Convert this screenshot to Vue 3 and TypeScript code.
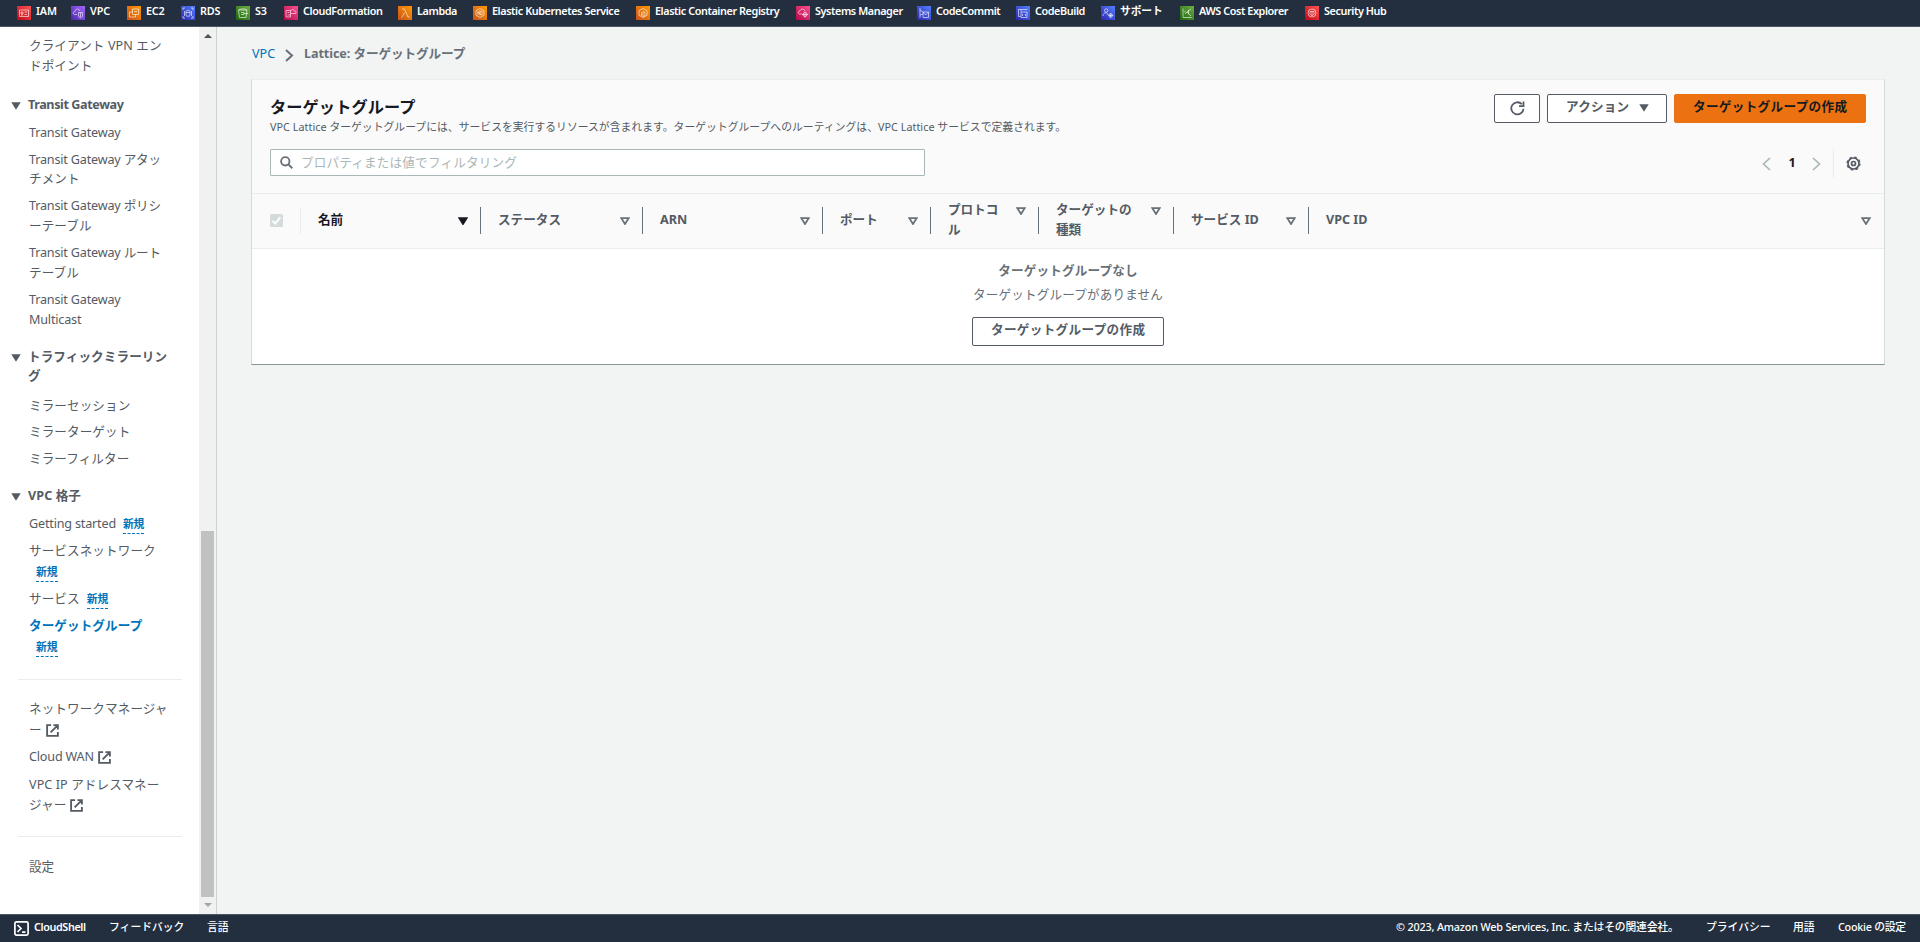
<script setup lang="ts">
interface Service { name: string; tone: string; icon: string }
interface NavItem { lines: string[]; badge?: 'inline' | 'below'; active?: boolean; external?: boolean }
interface NavSection { title?: string[]; items: NavItem[] }
interface Column { label: string[]; active?: boolean }

const services: Service[] = [
  { name: 'IAM', tone: 'red', icon: 'M2.5 4h9v6.500h-9zM4 6h2v2H4zM7.500 6h2.500M7.500 8.500h2.500M4 9h2' },
  { name: 'VPC', tone: 'purple', icon: 'M6 8.500H4C1.500 8.500 2 5.500 4 5.500C4 2.500 8.500 2.500 9 5M7.500 6.500h4v4l-2 1.500l-2-1.500zM9.500 7v4' },
  { name: 'EC2', tone: 'orange', icon: 'M5.500 3h6v5.500h-6zM8.500 8.500v2.500h-6v-5h3M7 5.500h3' },
  { name: 'RDS', tone: 'blue', icon: 'M2 4V2h2M10 2h2v2M2 10v2h2M10 12h2v-2M5 5.500c0-1.500 4-1.500 4 0v4c0 1-4 1-4 0zM5 6.500h4M3.500 5v5M10.500 5v5' },
  { name: 'S3', tone: 'green', icon: 'M2.500 4h8.500l-1 7.500h-6.500zM2.500 4c1-1.500 8-1.500 8.500 0M5 6.500h3v2H5M8 7.500h4' },
  { name: 'CloudFormation', tone: 'pink', icon: 'M2 4.500h4.500v6.500H2zM3.500 6.500h2M3.500 9h3M7 7.500h4C13 7 12 5 10.500 5C9.500 2.500 7 3.500 7 5' },
  { name: 'Lambda', tone: 'orange', icon: 'M4 3h2.500l3.500 8h1.500M6.800 6.500l-3.300 5' },
  { name: 'Elastic Kubernetes Service', tone: 'orange', icon: 'M7 2.500l4 2.200v4.600l-4 2.200l-4-2.200v-4.600zM7 4.500v5M5 5v4M5 7l3.500-2M5.500 7l3.500 2M9 5v4' },
  { name: 'Elastic Container Registry', tone: 'orange', icon: 'M7 2.500l4 2.200v4.600l-4 2.200l-4-2.200v-4.600zM5.500 6v4M7 5.500l2 1v3l-2 1z' },
  { name: 'Systems Manager', tone: 'pink', icon: 'M6 8H4C1.500 8 2 5 4 5C4.500 2 8.500 3 9 5M7 8.500a2 2 0 1 0 4 0a2 2 0 1 0-4 0M9 5.500v6M6 8.500h6' },
  { name: 'CodeCommit', tone: 'blue', icon: 'M3 2v10M3 4l3 2M6 6h5.500v5.500H6zM6 6l2.500 3l3-3M3 9l3-1' },
  { name: 'CodeBuild', tone: 'blue', icon: 'M2.500 3.500h9M2.500 3.500v7h2M5 6h6v5.500H5zM5 3.500v2M7 8l-1 1l1 1M9 8l1 1l-1 1' },
  { name: 'サポート', tone: 'blue', icon: 'M3.500 4.500a1.700 1.700 0 1 0 3.400 0a1.700 1.700 0 1 0-3.400 0M2 10c0-4 5-4 5-1M8 9.500a1.700 1.700 0 1 0 3.400 0a1.700 1.700 0 1 0-3.400 0M9.700 7v5M7.200 9.500h5' },
  { name: 'AWS Cost Explorer', tone: 'green', icon: 'M3 2.500v9h8.500M5 8l2-2l4-3M7 6l4 4M8.500 4v4M5 4.500v2' },
  { name: 'Security Hub', tone: 'red', icon: 'M3 7a4 4 0 1 0 8 0a4 4 0 1 0-8 0M5 5.500h4v2c0 1-1 2-2 2s-2-1-2-2zM7 5.500v4' },
]

const sections: NavSection[] = [
  { items: [{ lines: ['クライアント VPN エン', 'ドポイント'] }] },
  {
    title: ['Transit Gateway'],
    items: [
      { lines: ['Transit Gateway'] },
      { lines: ['Transit Gateway アタッ', 'チメント'] },
      { lines: ['Transit Gateway ポリシ', 'ーテーブル'] },
      { lines: ['Transit Gateway ルート', 'テーブル'] },
      { lines: ['Transit Gateway', 'Multicast'] },
    ],
  },
  {
    title: ['トラフィックミラーリン', 'グ'],
    items: [{ lines: ['ミラーセッション'] }, { lines: ['ミラーターゲット'] }, { lines: ['ミラーフィルター'] }],
  },
  {
    title: ['VPC 格子'],
    items: [
      { lines: ['Getting started'], badge: 'inline' },
      { lines: ['サービスネットワーク'], badge: 'below' },
      { lines: ['サービス'], badge: 'inline' },
      { lines: ['ターゲットグループ'], badge: 'below', active: true },
    ],
  },
]

const tools: NavItem[] = [
  { lines: ['ネットワークマネージャ', 'ー'], external: true },
  { lines: ['Cloud WAN'], external: true },
  { lines: ['VPC IP アドレスマネー', 'ジャー'], external: true },
]

const columns: Column[] = [
  { label: ['名前'], active: true },
  { label: ['ステータス'] },
  { label: ['ARN'] },
  { label: ['ポート'] },
  { label: ['プロトコ', 'ル'] },
  { label: ['ターゲットの', '種類'] },
  { label: ['サービス ID'] },
  { label: ['VPC ID'] },
]

// Latin runs are tracked slightly tighter than kana.
const tracking = (text: string): string => (/[A-Za-z]{4}/.test(text) ? 'latin' : 'kana')
</script>

<template>
  <div class="console">
    <header class="topbar">
      <a v-for="s in services" :key="s.name" class="service">
        <svg class="service-icon" :class="s.tone" viewBox="0 0 14 14"><path :d="s.icon" /></svg>
        <span :class="tracking(s.name)">{{ s.name }}</span>
      </a>
    </header>

    <div class="body">
      <aside class="sidebar">
        <nav class="nav">
          <section v-for="(sec, i) in sections" :key="i" class="section">
            <h3 v-if="sec.title" class="section-title" :class="{ tall: sec.title.length > 1 }">
              <svg class="caret" viewBox="0 0 10 8"><path d="M.3.300h9.400L5 7.700z" /></svg>
              <span v-for="l in sec.title" :key="l" class="line" :class="tracking(l)">{{ l }}</span>
            </h3>
            <a v-for="(item, j) in sec.items" :key="j" class="item" :class="{ active: item.active }">
              <span v-for="(l, k) in item.lines" :key="k" class="line" :class="tracking(l)">{{ l }}<em v-if="item.badge === 'inline'" class="badge">新規</em></span>
              <span v-if="item.badge === 'below'" class="line below"><em class="badge">新規</em></span>
            </a>
          </section>
          <hr class="rule" />
          <section class="section">
            <a v-for="(item, j) in tools" :key="j" class="item">
              <span v-for="(l, k) in item.lines" :key="k" class="line" :class="[tracking(l), { linked: k === item.lines.length - 1 }]">{{ l }}<svg
                v-if="k === item.lines.length - 1" class="external" viewBox="0 0 14 14"><path d="M5.500 1.200H1.200v11.600h11.600V8.500M8 1.200h4.800V6M12.800 1.200L5 9" /></svg></span>
            </a>
          </section>
          <hr class="rule second" />
          <a class="item"><span class="line">設定</span></a>
        </nav>
        <div class="scrollbar">
          <svg class="arrow" viewBox="0 0 8 4"><path d="M0 4L4 0L8 4z" /></svg>
          <div class="thumb"></div>
          <svg class="arrow down" viewBox="0 0 8 4"><path d="M0 0L4 4L8 0z" /></svg>
        </div>
      </aside>

      <main class="main">
        <div class="breadcrumb">
          <a class="crumb-link">VPC</a>
          <svg class="crumb-sep" viewBox="0 0 9 13"><path d="M1 1l6 5.500L1 12" /></svg>
          <strong>Lattice: ターゲットグループ</strong>
        </div>

        <section class="card">
          <div class="card-head">
            <div class="heading">
              <div>
                <h1>ターゲットグループ</h1>
                <p class="description">VPC Lattice ターゲットグループには、サービスを実行するリソースが含まれます。ターゲットグループへのルーティングは、VPC Lattice サービスで定義されます。</p>
              </div>
              <div class="actions">
                <button class="btn refresh">
                  <svg viewBox="0 0 15 15"><path d="M13.500 7.700a6.100 6.100 0 1 1-1.700-4.600M13.500.6v4.600H9" /></svg>
                </button>
                <button class="btn menu">アクション<svg class="caret" viewBox="0 0 10 8"><path d="M.3.300h9.400L5 7.700z" /></svg></button>
                <button class="btn create primary">ターゲットグループの作成</button>
              </div>
            </div>
            <div class="filters">
              <div class="search">
                <svg viewBox="0 0 14 14"><circle cx="5.700" cy="5.700" r="4.500" /><path d="M9 9l4.200 4.200" /></svg>
                <span>プロパティまたは値でフィルタリング</span>
              </div>
              <div class="pager">
                <svg class="chev" viewBox="0 0 9 14"><path d="M8 1L1.500 7L8 13" /></svg>
                <b>1</b>
                <svg class="chev" viewBox="0 0 9 14"><path d="M1 1l6.500 6L1 13" /></svg>
                <i class="pager-rule"></i>
                <svg class="gear" viewBox="0 0 15 15">
                  <circle cx="7.500" cy="7.500" r="5.500" />
                  <circle class="teeth" cx="7.500" cy="7.500" r="6.500" />
                  <circle cx="7.500" cy="7.500" r="2" />
                </svg>
              </div>
            </div>
          </div>

          <div class="table-head">
            <div class="select">
              <svg viewBox="0 0 13 13"><rect width="13" height="13" rx="1.500" /><path d="M2.500 6.800l2.800 2.800l5-6.500" /></svg>
            </div>
            <div v-for="(c, i) in columns" :key="i" class="col" :class="{ sorted: c.active }">
              <div class="col-label"><span v-for="l in c.label" :key="l">{{ l }}</span></div>
              <svg class="sort" :class="{ raised: c.label.length > 1 }" viewBox="0 0 10 8"><path d="M1.300 1.200h7.400L5 7z" /></svg>
            </div>
          </div>

          <div class="empty">
            <strong>ターゲットグループなし</strong>
            <p>ターゲットグループがありません</p>
            <button class="btn create">ターゲットグループの作成</button>
          </div>
        </section>
      </main>
    </div>

    <footer class="footer">
      <svg class="shell" viewBox="0 0 15 15"><rect x=".9" y=".9" width="13.200" height="13.200" rx="1.500" /><path d="M3.500 4l3.500 3.500L3.500 11M8 11.200h3.500" /></svg>
      <span class="shell-label">CloudShell</span>
      <span class="feedback">フィードバック</span>
      <span>言語</span>
      <span class="copyright">© 2023, Amazon Web Services, Inc. またはその関連会社。</span>
      <span class="privacy">プライバシー</span>
      <span class="terms">用語</span>
      <span class="cookie">Cookie の設定</span>
    </footer>
  </div>
</template>

<style>
body { margin: 0; overflow: hidden; }
</style>

<style scoped>
* { box-sizing: border-box; }
.console {
  width: 1920px;
  height: 942px;
  display: flex;
  flex-direction: column;
  background: #f2f3f3;
  color: #545b64;
  font: 12.6px/19.8px "Noto Sans", "Noto Sans CJK JP", sans-serif;
  white-space: nowrap;
}
svg { display: block; flex: none; fill: none; stroke: currentColor; }

.topbar {
  height: 27px;
  flex: none;
  display: grid;
  grid-template-columns: 54px 56px 54px 55px 48px 114px 75px 163px 160px 121px 99px 85px 79px 125px 90px;
  padding-left: 17px;
  background: #232f3e;
  border-bottom: 1px solid #4b5563;
  color: #fff;
  font-size: 10.8px;
  font-weight: 600;
  line-height: 22px;
}
.service { display: flex; align-items: flex-start; gap: 5px; }
.service .latin { letter-spacing: -.4px; }
.service .kana { letter-spacing: -.15px; }
.service-icon { width: 14px; height: 14px; margin-top: 6px; stroke: rgba(255, 255, 255, .75); stroke-width: .8; }
.red { background: linear-gradient(45deg, #bd0816, #ff5252); }
.purple { background: linear-gradient(45deg, #4d27a8, #a166ff); }
.orange { background: linear-gradient(45deg, #c8511b, #f90); }
.blue { background: linear-gradient(45deg, #2e27ad, #527fff); }
.green { background: linear-gradient(45deg, #1b660f, #6cae3e); }
.pink { background: linear-gradient(45deg, #b0084d, #ff4f8b); }

.body { flex: 1; display: flex; min-height: 0; }
.sidebar { width: 217px; display: flex; background: #fff; border-right: 1px solid #ccd1d1; overflow: hidden; }
.nav { width: 199px; padding: 9px 18px 0 29px; }
.nav .latin { letter-spacing: -.18px; }
.nav .kana { letter-spacing: .08px; }
.section { margin-bottom: 17.3px; }
.section:first-child { margin-bottom: 19.2px; }
.section-title { margin: 0 0 8.200px; font-size: 12.6px; font-weight: 700; position: relative; }
.section-title.tall { margin-bottom: 9.4px; }
.section-title .line { margin-left: -1px; }
.section-title .latin { letter-spacing: -.4px; }
.section-title .caret { position: absolute; left: -18px; top: 7px; }
.caret { width: 10px; height: 8px; fill: currentColor; stroke: none; }
.line { display: flex; align-items: center; height: 19.8px; white-space: pre; }
.line.below { height: 21px; padding-top: 1px; }
.line.linked { height: 20.6px; }
.item { display: block; margin-bottom: 7.1px; }
.item.active { color: #0073bb; font-weight: 700; }
.badge {
  height: 20px;
  margin-left: 7px;
  border-bottom: 1px dashed #0073bb;
  color: #0073bb;
  font-size: 10.8px;
  font-style: normal;
  font-weight: 700;
  line-height: 19px;
}
.external { width: 13px; height: 13px; margin: 1px 0 0 4px; stroke-width: 2; }
.rule { height: 1px; margin: 22px -1px 19.5px -11px; border: 0; background: #eaeded; }
.rule.second { margin-top: 21.5px; }
.scrollbar { width: 17px; display: flex; flex-direction: column; align-items: center; background: #f1f1f1; padding: 7px 0 7px; }
.arrow { width: 8px; height: 4px; fill: #505050; stroke: none; }
.arrow.down { fill: #a3a3a3; margin-top: 6px; }
.thumb { width: 13px; height: 366px; margin-top: auto; background: #c1c1c1; }

.main { flex: 1; padding: 17px 35px 0 35px; }
.breadcrumb { display: flex; align-items: center; height: 20px; color: #687078; }
.breadcrumb strong { letter-spacing: -.08px; }
.crumb-link { width: 33px; color: #0073bb; }
.crumb-sep { width: 9px; height: 13px; margin: 2px 10px 0 0; stroke-width: 2; }

.card {
  margin-top: 15px;
  width: 1634px;
  height: 286px;
  background: #fff;
  border: 1px solid #d5dbdb;
  border-top-color: #eaeded;
  border-bottom-color: #879596;
  display: flex;
  flex-direction: column;
  margin-left: -1px;
}
.card-head { height: 114px; padding: 14px 18px 0 18px; background: #fafafa; border-bottom: 1px solid #eaeded; }
.heading { display: flex; justify-content: space-between; height: 55px; }
h1 { margin: 2px 0 0; color: #16191f; font-size: 16.2px; line-height: 22px; font-weight: 700; letter-spacing: .1px; }
.description { margin: 0; font-size: 10.8px; line-height: 18px; letter-spacing: .03px; }
.actions { display: flex; gap: 7px; height: 29px; }
.btn {
  height: 29px;
  padding: 0 18px;
  border: 1px solid #545b64;
  border-radius: 2px;
  background: #fff;
  color: #545b64;
  font: inherit;
  font-weight: 700;
  line-height: 23px;
  letter-spacing: .2px;
  display: flex;
}
.refresh { width: 46px; padding: 6px 0 0 15px; }
.refresh svg { width: 15px; height: 15px; stroke-width: 1.8; }
.menu { width: 120px; }
.menu .caret { margin: 9px 0 0 10px; }
.create { width: 192px; letter-spacing: .33px; }
.primary { background: #ec7211; border-color: #ec7211; color: #16191f; }
.filters { display: flex; justify-content: space-between; align-items: flex-start; }
.search { width: 655px; height: 27px; display: flex; align-items: center; background: #fff; border: 1px solid #aab7b8; border-radius: 1px; padding-left: 9px; color: #aab7b8; letter-spacing: .17px; }
.search svg { width: 13px; height: 13px; margin-right: 8px; color: #687078; stroke-width: 2; }
.pager { display: flex; align-items: center; height: 29px; padding-right: 5px; color: #16191f; }
.pager b { width: 40px; text-align: center; line-height: 28px; height: 29px; margin: 0 0 0 1px; }
.chev { width: 9px; height: 14px; color: #aab7b8; stroke-width: 1.7; }
.pager-rule { width: 1px; height: 29px; margin: 0 12px; background: #eaeded; }
.gear { width: 15px; height: 15px; color: #545b64; stroke-width: 1.7; }
.gear .teeth { stroke-width: 1.2; stroke-dasharray: 2.6 2.505; }

.table-head {
  height: 55px;
  display: grid;
  grid-template-columns: 49px 180px 162px 180px 108px 108px 135px 135px 1fr;
  align-items: center;
  padding-bottom: 1px;
  background: #fafafa;
  border-bottom: 1px solid #eaeded;
  font-weight: 700;
}
.select { height: 27px; padding: 7px 0 0 18px; border-right: 1px solid #eaeded; }
.select svg { width: 13px; height: 13px; stroke: none; }
.select rect { fill: #d5dbdb; }
.select path { stroke: #fff; stroke-width: 1.8; }
.col { height: 27px; display: flex; align-items: center; justify-content: space-between; border-right: 1px solid #687078; padding: 0 12px 0 17px; }
.col:last-child { border-right: 0; padding-right: 13px; }
.col-label { display: flex; flex-direction: column; margin-top: -2px; }
.sorted { color: #16191f; }
.sort { width: 10px; height: 8px; stroke-width: 1.8; color: #687078; }
.sorted .sort { color: #16191f; fill: currentColor; }
.sort.raised { margin-bottom: 19px; }

.empty { flex: 1; display: flex; flex-direction: column; align-items: center; padding-top: 12px; color: #687078; letter-spacing: .15px; }
.empty p { margin: 4px 0 12px; }

.footer { height: 28px; flex: none; display: flex; background: #232f3e; border-top: 1px solid #4b5563; padding: 0 14px; color: #fff; font-size: 10.8px; line-height: 24px; font-weight: 500; }
.shell { width: 15px; height: 15px; margin: 6px 5px 0 0; stroke-width: 1.7; }
.shell-label { width: 75px; font-weight: 600; letter-spacing: -.38px; }
.feedback { width: 98px; }
.copyright { margin-left: auto; width: 310px; letter-spacing: -.17px; }
.privacy { width: 87px; }
.terms { width: 45px; }
.cookie { width: 68px; letter-spacing: -.25px; }
</style>
